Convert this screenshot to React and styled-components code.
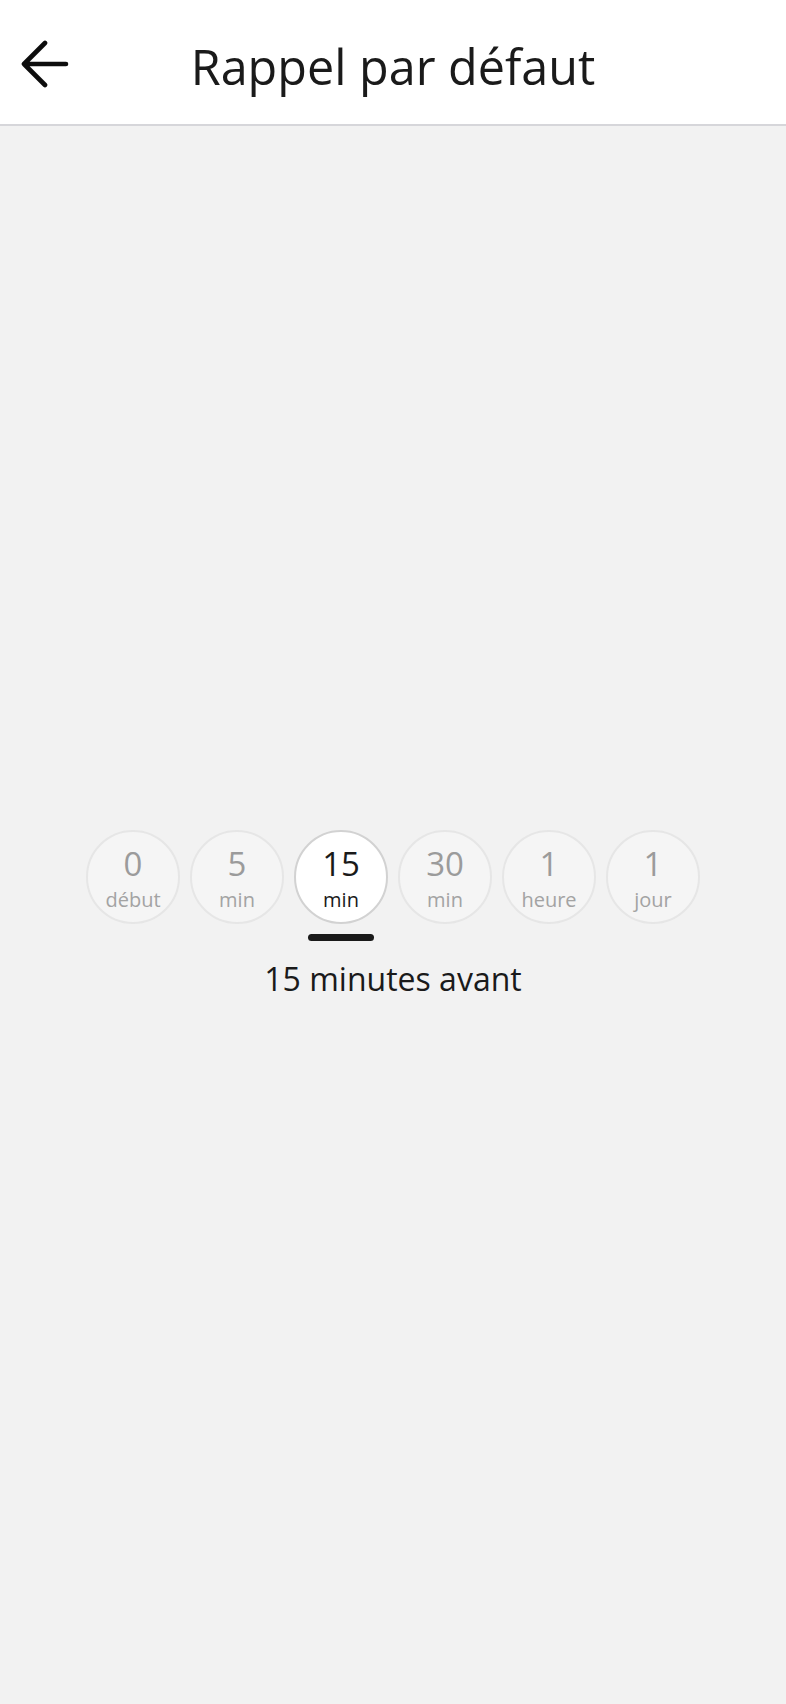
import React, { useState } from 'react';
import styled, { createGlobalStyle } from 'styled-components';

const GlobalStyle = createGlobalStyle`
    html, body {
        margin: 0;
        padding: 0;
        background: #f2f2f2;
        font-family: "Open Sans", "Noto Sans", sans-serif;
        color: #1a1a1a;
    }
`;

const Page = styled.div`
    min-height: 100vh;
    display: flex;
    flex-direction: column;
`;

const Header = styled.header`
    display: grid;
    grid-template-columns: 100px 1fr 100px;
    align-items: center;
    height: 126px;
    padding-top: 4px;
    box-sizing: border-box;
    background: #fff;
    border-bottom: 2px solid #d6d6da;
`;

const BackButton = styled.button`
    display: flex;
    align-items: center;
    justify-content: flex-start;
    padding: 0 0 0 20px;
    border: none;
    background: none;
    cursor: pointer;
`;

const Title = styled.h1`
    margin: 0;
    padding-top: 3px;
    text-align: center;
    font-size: 48.5px;
    line-height: 56px;
    font-weight: 400;
    color: #1a1a1a;
`;

const Content = styled.main`
    flex: 1;
    display: flex;
    flex-direction: column;
    align-items: center;
    justify-content: center;
    padding-bottom: 2px;
`;

const Options = styled.div`
    display: flex;
    gap: 10px;
`;

const Option = styled.div`
    display: flex;
    flex-direction: column;
    align-items: center;
`;

const Circle = styled.button`
    width: 94px;
    height: 94px;
    box-sizing: border-box;
    border-radius: 50%;
    border: ${p => (p.$active ? '2px solid #d2d2d2' : '2px solid #e6e6e6')};
    background: ${p => (p.$active ? '#fff' : '#f5f5f5')};
    display: flex;
    flex-direction: column;
    align-items: center;
    justify-content: center;
    padding: 4px 0 0;
    cursor: pointer;
    font-family: inherit;
    color: ${p => (p.$active ? '#1a1a1a' : '#9b9b9b')};
`;

const Value = styled.span`
    font-size: 33px;
    line-height: 34px;
`;

const Unit = styled.span`
    margin-top: 8px;
    font-size: 20px;
    line-height: 22px;
    color: ${p => (p.$active ? '#1a1a1a' : '#a3a3a3')};
`;

const Indicator = styled.div`
    margin-top: 10px;
    width: 66px;
    height: 7px;
    border-radius: 4px;
    background: ${p => (p.$active ? '#1a1a1a' : 'transparent')};
`;

const Summary = styled.p`
    margin: 18px 0 0;
    font-size: 32px;
    line-height: 40px;
    color: #1a1a1a;
`;

const options = [
    { value: '0', unit: 'début', text: 'Au début' },
    { value: '5', unit: 'min', text: '5 minutes avant' },
    { value: '15', unit: 'min', text: '15 minutes avant' },
    { value: '30', unit: 'min', text: '30 minutes avant' },
    { value: '1', unit: 'heure', text: '1 heure avant' },
    { value: '1', unit: 'jour', text: '1 jour avant' },
];

const App = () => {
    const [selected, setSelected] = useState(2);

    return (
        <Page>
            <GlobalStyle />
            <Header>
                <BackButton aria-label="Retour">
                    <svg width="50" height="48" viewBox="0 0 50 48" fill="none">
                        <path
                            d="M46 24H4M25 3L4 24l21 21"
                            stroke="#0d0d0d"
                            strokeWidth="4.6"
                            strokeLinecap="round"
                            strokeLinejoin="round"
                        />
                    </svg>
                </BackButton>
                <Title>Rappel par défaut</Title>
                <div />
            </Header>
            <Content>
                <Options>
                    {options.map((o, i) => (
                        <Option key={i}>
                            <Circle $active={i === selected} onClick={() => setSelected(i)}>
                                <Value>{o.value}</Value>
                                <Unit $active={i === selected}>{o.unit}</Unit>
                            </Circle>
                            <Indicator $active={i === selected} />
                        </Option>
                    ))}
                </Options>
                <Summary>{options[selected].text}</Summary>
            </Content>
        </Page>
    );
};

export default App;
